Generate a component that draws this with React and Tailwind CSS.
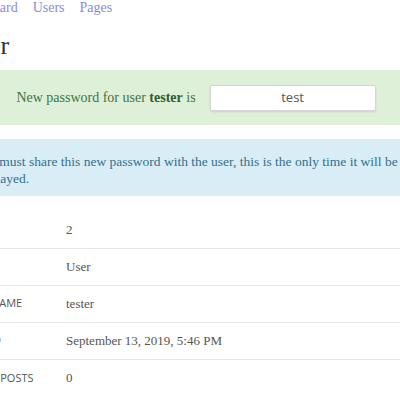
import React from 'react';

const serif = { fontFamily: '"Liberation Serif", "DejaVu Serif", serif' };
const sans = { fontFamily: '"Open Sans", "Liberation Sans", sans-serif' };

const rows = [
    { label: 'ID', value: '2' },
    { label: 'Role', value: 'User' },
    { label: 'Username', value: 'tester' },
    { label: 'Joined', value: 'September 13, 2019, 5:46 PM' },
    { label: 'Total Posts', value: '0' },
];

const App = () => {
    return (
        <div className="w-[400px] h-[400px] overflow-hidden bg-white">
            <div className="-ml-[48px] w-[488px] text-[#555]" style={serif}>
                {/* top nav */}
                <nav className="pl-[5px] flex gap-[15px] text-[14px] leading-[15px] text-[#8a8ad6]">
                    <a>Dashboard</a>
                    <a>Users</a>
                    <a>Pages</a>
                </nav>

                <h1 className="mt-[16px] pl-[8px] text-[26px] leading-[30px] text-[#333]">User</h1>

                {/* new password */}
                <div className="mt-[9px] h-[55px] bg-[#dff0d8] flex items-center justify-center gap-[14px]">
                    <span className="text-[14px] text-[#3c763d]">
                        New password for user <b className="text-[#2f5f2f]">tester</b> is
                    </span>
                    <div
                        className="w-[166px] h-[26px] bg-white border border-[#d6d6d6] rounded-[2px] shadow-[0_1px_2px_rgba(0,0,0,0.12)] flex items-center justify-center text-[13px] text-[#555]"
                        style={sans}
                    >
                        test
                    </div>
                </div>

                <div className="mt-[14px] bg-[#d9edf7] pl-[22px] pt-[14px] pb-[9px] text-[13.5px] leading-[17px] text-[#31708f]">
                    <span className="whitespace-nowrap">You must share this new password with the user, this is the only time it will be</span>
                    <br />
                    displayed.
                </div>

                {/* user details */}
                <table className="mt-[15px] w-full border-collapse">
                    <tbody>
                        {rows.map((r, i) => (
                            <tr key={i} className={i > 0 ? 'border-t border-[#e6e6e6]' : ''}>
                                <td className="w-[114px] h-[37px] pl-[12px] text-[11px] uppercase text-[#555] align-middle" style={sans}>
                                    {r.label}
                                </td>
                                <td className="h-[37px] text-[13px] text-[#555] align-middle">{r.value}</td>
                            </tr>
                        ))}
                    </tbody>
                </table>
            </div>
        </div>
    );
};

export default App;
